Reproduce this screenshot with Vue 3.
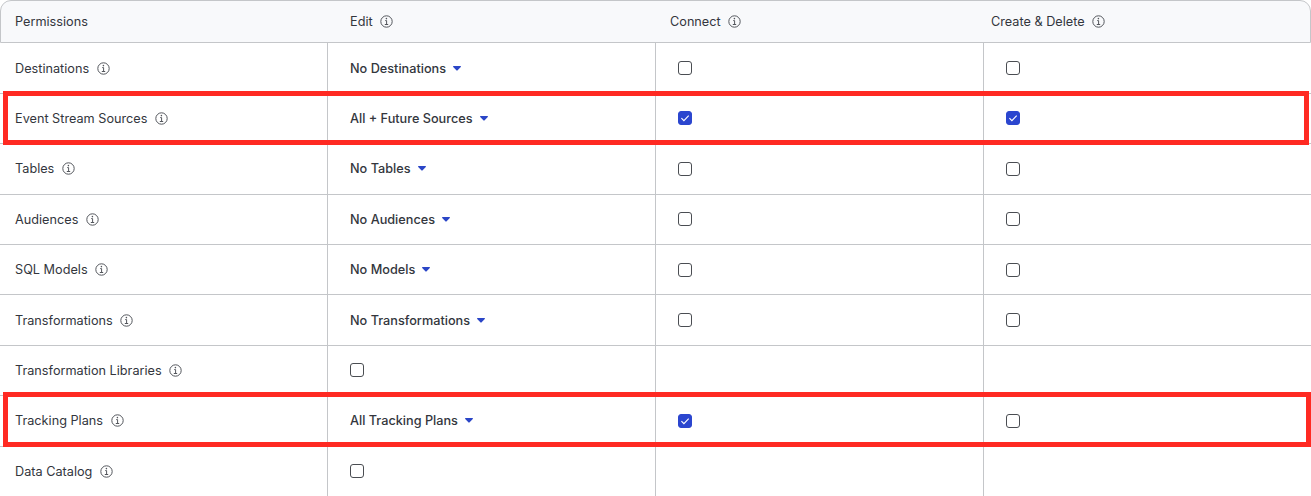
<script setup>
const headers = [
  { label: 'Permissions', info: false, cls: 'h0' },
  { label: 'Edit', info: true, cls: 'h1' },
  { label: 'Connect', info: true, cls: 'h2' },
  { label: 'Create & Delete', info: true, cls: 'h3' },
]
const rows = [
  { name: 'Destinations', edit: 'No Destinations', connect: false, create: false },
  { name: 'Event Stream Sources', edit: 'All + Future Sources', connect: true, create: true, mark: true },
  { name: 'Tables', edit: 'No Tables', connect: false, create: false },
  { name: 'Audiences', edit: 'No Audiences', connect: false, create: false },
  { name: 'SQL Models', edit: 'No Models', connect: false, create: false },
  { name: 'Transformations', edit: 'No Transformations', connect: false, create: false },
  { name: 'Transformation Libraries', editBox: true },
  { name: 'Tracking Plans', edit: 'All Tracking Plans', connect: true, create: false, mark: true },
  { name: 'Data Catalog', editBox: true },
]
</script>

<template>
  <div class="page">
    <div class="head">
      <div v-for="h in headers" :key="h.label" class="hcell" :class="h.cls">
        <span>{{ h.label }}</span>
        <svg v-if="h.info" class="info" viewBox="0 0 13 13"><circle cx="6.5" cy="6.5" r="5.7" /><path d="M5.2 5.6h1.4v3.8M4.8 9.5h3.4" /><circle class="dot" cx="6.4" cy="3.6" r=".8" /></svg>
      </div>
    </div>
    <div v-for="r in rows" :key="r.name" class="row">
      <div class="cell c0">
        <span>{{ r.name }}</span>
        <svg class="info" viewBox="0 0 13 13"><circle cx="6.5" cy="6.5" r="5.7" /><path d="M5.2 5.6h1.4v3.8M4.8 9.5h3.4" /><circle class="dot" cx="6.4" cy="3.6" r=".8" /></svg>
      </div>
      <div class="cell c1">
        <span v-if="r.editBox" class="box"></span>
        <template v-else>
          <strong>{{ r.edit }}</strong>
          <svg class="caret" viewBox="0 0 8 5"><path d="M.6 0h6.8c.5 0 .8.6.4 1L4.4 4.5c-.2.2-.6.2-.8 0L.2 1C-.2.6.1 0 .6 0z" /></svg>
        </template>
      </div>
      <div class="cell c2">
        <span v-if="!r.editBox" class="box" :class="{ on: r.connect }">
          <svg v-if="r.connect" viewBox="0 0 14 14"><path d="M3.4 7.2l2.5 2.5 4.8-5.1" /></svg>
        </span>
      </div>
      <div class="cell c3">
        <span v-if="!r.editBox" class="box" :class="{ on: r.create }">
          <svg v-if="r.create" viewBox="0 0 14 14"><path d="M3.4 7.2l2.5 2.5 4.8-5.1" /></svg>
        </span>
      </div>
    </div>
    <div class="mark m1"></div>
    <div class="mark m2"></div>
  </div>
</template>

<style>
html, body { margin: 0; background: #fff; }
</style>

<style scoped>
.page {
  position: relative;
  width: 1311px;
  height: 496px;
  overflow: hidden;
  background: #fff;
  font-family: Inter, "Liberation Sans", sans-serif;
  font-size: 12.7px;
  color: #33363d;
}
.head {
  display: grid;
  grid-template-columns: 327px 328px 328px 1fr;
  height: 43.4px;
  padding-bottom: 1px;
  box-sizing: border-box;
  background: #f8f9fb;
  border: 1px solid #c4c6c9;
  border-radius: 11px 11px 0 0;
}
.hcell {
  display: flex;
  align-items: center;
  gap: 7px;
}
.h0 { padding-left: 14px; }
.h1 { padding-left: 22px; }
.h2 { padding-left: 14px; }
.h3 { padding-left: 7px; }
.row {
  display: grid;
  grid-template-columns: 327px 328px 328px 1fr;
  height: 50.4px;
  box-sizing: border-box;
  border-bottom: 1px solid #c4c6c9;
}
.cell {
  display: flex;
  align-items: center;
  min-width: 0;
  box-sizing: border-box;
}
.c0 { padding-left: 15px; gap: 7.6px; }
.c1 { padding-left: 22px; gap: 7px; border-left: 1px solid #c4c6c9; }
.c2 { padding-left: 22px; border-left: 1px solid #c4c6c9; }
.c3 { padding-left: 22px; border-left: 1px solid #c4c6c9; }
.c1 strong { font-weight: 550; }
.info {
  width: 13px;
  height: 13px;
  flex: none;
  fill: none;
  stroke: #53565c;
  stroke-width: 1;
}
.info .dot { fill: #53565c; stroke: none; }
.caret { width: 8px; height: 5px; fill: #2b46c7; flex: none; }
.box {
  display: block;
  width: 14px;
  height: 14px;
  box-sizing: border-box;
  border: 1px solid #4a4d52;
  border-radius: 3px;
  background: #fff;
  position: relative;
}
.box.on { background: #2b46cf; border-color: #2b46cf; }
.box svg {
  position: absolute;
  left: -1px;
  top: -1px;
  width: 14px;
  height: 14px;
  fill: none;
  stroke: #fff;
  stroke-width: 1.1;
}
.mark {
  position: absolute;
  left: 3px;
  width: 1306px;
  box-sizing: border-box;
  border: 5px solid #ff2a22;
  pointer-events: none;
}
.m1 { top: 91px; height: 54px; }
.m2 { top: 392px; height: 55px; width: 1308px; }
</style>
